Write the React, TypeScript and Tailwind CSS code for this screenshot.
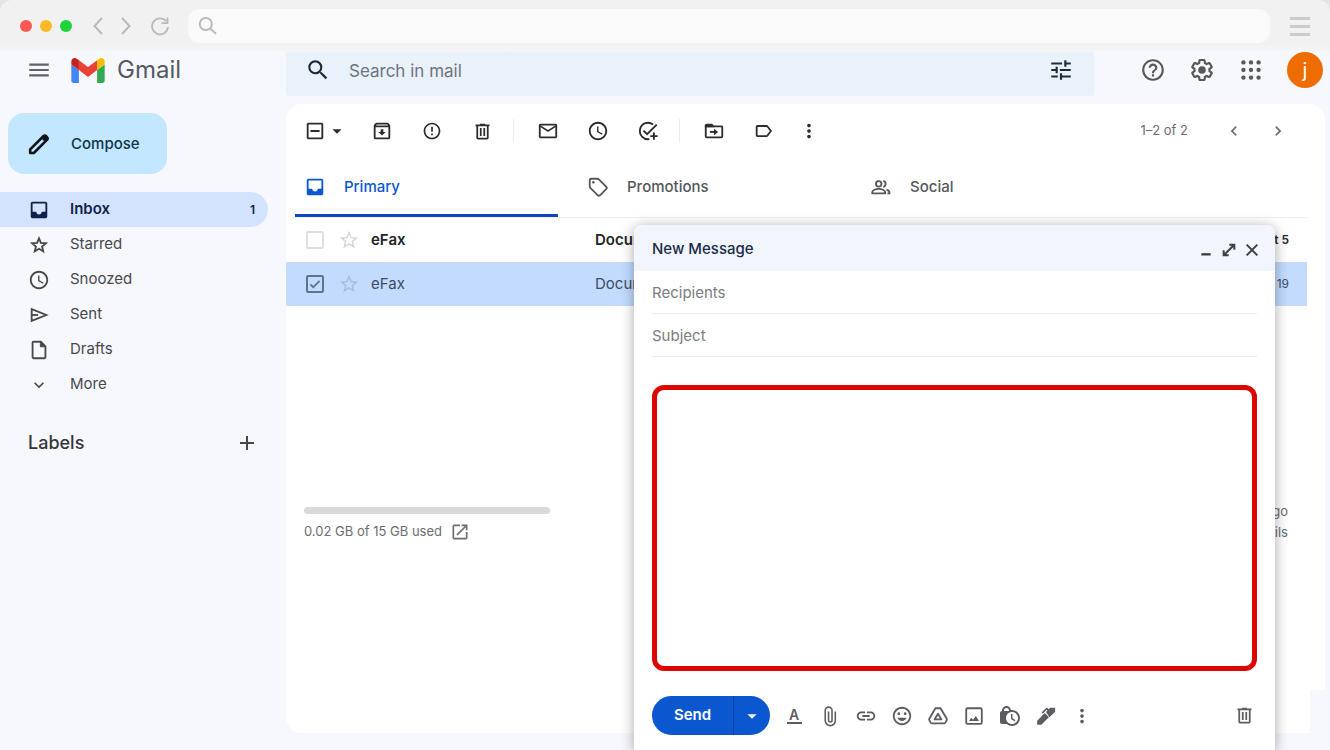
import React from "react";
import { clsx } from "clsx";
import {
  MdAdd,
  MdArrowDropDown,
  MdErrorOutline,
  MdHelpOutline,
  MdInsertLink,
  MdKeyboardArrowDown,
  MdKeyboardArrowLeft,
  MdKeyboardArrowRight,
  MdLockClock,
  MdMailOutline,
  MdMenu,
  MdMoreVert,
  MdOpenInNew,
  MdOutlineArchive,
  MdOutlineIndeterminateCheckBox,
  MdOutlineInsertEmoticon,
  MdSchedule,
  MdSearch,
  MdStarBorder,
  MdTune,
} from "react-icons/md";

// ─── Types ───────────────────────────────────────────────────────────────────

interface IconAction {
  label: string;
  icon: React.ReactNode;
}

interface Folder extends IconAction {
  count?: number;
  isActive?: boolean;
}

interface Mail {
  id: number;
  sender: string;
  subject: string;
  date: string;
  unread?: boolean;
  selected?: boolean;
}

// ─── Custom icons ────────────────────────────────────────────────────────────

function GmailLogo() {
  return (
    <svg viewBox="52 42 88 66" className="h-[25px] w-[34px]" aria-hidden="true">
      <path fill="#4285f4" d="M58 108h14V74L52 59v43c0 3.32 2.69 6 6 6" />
      <path fill="#34a853" d="M120 108h14c3.32 0 6-2.69 6-6V59l-20 15" />
      <path fill="#fbbc04" d="M120 48v26l20-15v-8c0-7.42-8.47-11.65-14.4-7.2" />
      <path fill="#ea4335" d="M72 74V48l24 18 24-18v26L96 92" />
      <path fill="#c5221f" d="M52 51v8l20 15V48l-5.6-4.2c-5.94-4.45-14.4-.22-14.4 7.2" />
    </svg>
  );
}

/** Solid glyph on the 24px grid */
function FilledIcon({ children }: { children: React.ReactNode }) {
  return (
    <svg viewBox="0 0 24 24" className="size-[22px]" fill="currentColor" aria-hidden="true">
      {children}
    </svg>
  );
}

/** Outlined glyph on the 24px grid */
function LineIcon({ className = "size-[22px]", children }: { className?: string; children: React.ReactNode }) {
  return (
    <svg
      viewBox="0 0 24 24"
      className={className}
      fill="none"
      stroke="currentColor"
      strokeWidth="2"
      aria-hidden="true"
    >
      {children}
    </svg>
  );
}

function TrashIcon() {
  return (
    <svg viewBox="0 0 24 24" className="size-[21px]" fill="currentColor" aria-hidden="true">
      <path d="M15 4V3H9v1H4v2h1v13c0 1.1.9 2 2 2h10c1.1 0 2-.9 2-2V6h1V4h-5zm2 15H7V6h10v13zM9 8h2v9H9zm4 0h2v9h-2z" />
    </svg>
  );
}

function InboxIcon() {
  return (
    <FilledIcon>
      <path d="M19 3H5c-1.1 0-2 .9-2 2v14c0 1.1.9 2 2 2h14c1.1 0 2-.9 2-2V5c0-1.1-.9-2-2-2zm0 11h-4c0 1.66-1.35 3-3 3s-3-1.34-3-3H5V5h14v9z" />
    </FilledIcon>
  );
}

function StarIcon() {
  return (
    <LineIcon className="size-5">
      <path d="m12 4 2.300 5.500 6 .5-4.600 3.900 1.400 5.800-5.100-3.100-5.100 3.100 1.400-5.800L3.700 10l6-.5z" strokeWidth="2.200" />
    </LineIcon>
  );
}

function TagIcon() {
  return (
    <LineIcon>
      <path d="M3 4.6v6.8c0 .6.2 1.1.6 1.5l8 8c.8.8 2 .8 2.8 0l6.500-6.500c.8-.8.8-2 0-2.800l-8-8c-.4-.4-.9-.6-1.500-.6H4.600C3.700 3 3 3.700 3 4.600z" />
      <circle cx="6.900" cy="6.900" r="1.400" fill="currentColor" stroke="none" />
    </LineIcon>
  );
}

function PeopleIcon() {
  return (
    <LineIcon>
      <circle cx="9.500" cy="8.500" r="3" />
      <path d="M2.500 19v-1.500c0-2 4-3.500 7-3.500s7 1.500 7 3.500V19z" />
      <path d="M14.500 5.200a3.400 3.400 0 0 1 0 6.600M18 14.800c2 .8 3.200 1.700 3.200 2.900V19H19" />
    </LineIcon>
  );
}

function SendIcon() {
  return (
    <LineIcon>
      <path d="M4 5.500v13L20 12z" />
      <path d="M4 12h7" />
    </LineIcon>
  );
}

function FileIcon() {
  return (
    <LineIcon>
      <path d="M6 3h8l5 5v12c0 .6-.4 1-1 1H6c-.6 0-1-.4-1-1V4c0-.6.4-1 1-1z" />
      <path d="M13.500 3v5.500H19L13.500 3z" fill="currentColor" strokeWidth="1" />
    </LineIcon>
  );
}

function AddTaskIcon() {
  return (
    <LineIcon>
      <path d="M17.500 4.800A9 9 0 1 0 13.500 20.900" />
      <path d="m7 11.500 4 4L21.500 5M18.500 13.500v8M14.500 17.500h8" />
    </LineIcon>
  );
}

function MoveIcon() {
  return (
    <LineIcon>
      <path d="M3 6v12c0 .6.4 1 1 1h16c.6 0 1-.4 1-1V8c0-.6-.4-1-1-1H3" />
      <path d="M2 8V6c0-1.100.9-2 2-2h6l2.500 3v1z" fill="currentColor" stroke="none" />
      <path d="M7.500 13H14" />
      <path d="m12 9.500 4.500 3.500-4.500 3.500z" fill="currentColor" stroke="none" />
    </LineIcon>
  );
}

function LabelIcon() {
  return (
    <LineIcon>
      <path d="M5 6.500h9.500c.6 0 1 .2 1.300.6L19.500 12l-3.700 4.900c-.3.400-.7.600-1.300.600H5c-.6 0-1-.4-1-1v-9c0-.6.4-1 1-1z" />
    </LineIcon>
  );
}

function ClipIcon() {
  return (
    <LineIcon>
      <path
        d="M17.800 7v10a5.500 5.500 0 0 1-11 0V6a3.700 3.700 0 0 1 7.400 0v10.500a1.900 1.900 0 0 1-3.800 0V7"
        strokeWidth="1.700"
      />
    </LineIcon>
  );
}

function PhotoIcon() {
  return (
    <LineIcon>
      <rect x="3.500" y="3.500" width="17" height="17" rx="1.500" />
      <path d="M6.500 17.500 9 14l2 2 3-4 3.500 5.500z" fill="currentColor" stroke="none" />
    </LineIcon>
  );
}

function DriveIcon() {
  return (
    <LineIcon>
      <path
        d="M9.200 3.500h5.600l6.700 11.500c.3.500.3 1 0 1.500l-1.500 2.700c-.3.500-.8.800-1.300.8H5.300c-.5 0-1-.3-1.300-.8l-1.500-2.700c-.3-.5-.3-1 0-1.500z"
        strokeLinejoin="round"
      />
      <path d="m12 9.500 3.700 6.200H8.300z" strokeLinejoin="round" />
    </LineIcon>
  );
}

function SignatureIcon() {
  return (
    <FilledIcon>
      <path d="M2.400 21.600v-4.500l8.300-8.300 4.500 4.500-8.300 8.300z" />
      <path d="m12 7.500 1.500-1.500-.8-.7L8.500 9.500 7.200 8.200l4.900-4.900c.5-.4 1-.4 1.400 0l1.500 1.300 1.200-1.200c.2-.3.500-.4.800-.4H22v4.300l-6.200 6z" />
    </FilledIcon>
  );
}

function FormatIcon() {
  return <span className="w-[15px] border-b-2 text-center text-sm leading-[14px] font-semibold">A</span>;
}

function CheckIcon() {
  return (
    <LineIcon className="pointer-events-none absolute size-[14px] text-[#5f7390]">
      <path d="m4 12.500 5 5L20 6.500" strokeWidth="3" />
    </LineIcon>
  );
}

function MinimizeIcon() {
  return (
    <LineIcon className="size-4">
      <path d="M5 18.500h14" strokeWidth="3.500" />
    </LineIcon>
  );
}

function ExpandIcon() {
  return (
    <LineIcon className="size-4">
      <path d="M12.500 4H20v7.500M11.500 20H4v-7.500M19.500 4.500l-15 15" strokeWidth="3" />
    </LineIcon>
  );
}

function CloseIcon() {
  return (
    <LineIcon className="size-4">
      <path d="m4 4 16 16M20 4 4 20" strokeWidth="3" />
    </LineIcon>
  );
}

function PencilIcon() {
  return (
    <svg viewBox="0 0 24 24" className="size-6" aria-hidden="true">
      <path
        d="M3.200 21v-3.600L16.600 4a1.600 1.600 0 0 1 2.300 0l1.300 1.300a1.600 1.600 0 0 1 0 2.300L6.800 21z"
        fill="none"
        stroke="currentColor"
        strokeWidth="2.600"
        strokeLinejoin="round"
      />
      <path d="M14 6 17 3l4.200 4.200-3 3z" fill="currentColor" />
    </svg>
  );
}

function GearIcon() {
  return (
    <svg viewBox="0 0 24 24" className="size-[26px]" fill="currentColor" aria-hidden="true">
      <path d="M13.85 22.25h-3.7c-.74 0-1.36-.54-1.45-1.27l-.27-1.89c-.27-.14-.53-.29-.79-.46l-1.8.72c-.7.26-1.47-.03-1.81-.65L2.2 15.53c-.35-.66-.2-1.44.36-1.88l1.53-1.19c-.01-.15-.02-.3-.02-.46 0-.15.01-.31.02-.46l-1.52-1.19c-.59-.45-.74-1.26-.37-1.88l1.85-3.19c.34-.62 1.11-.9 1.79-.63l1.81.73c.26-.17.52-.32.78-.46l.27-1.91c.09-.7.71-1.25 1.44-1.25h3.7c.74 0 1.36.54 1.45 1.27l.27 1.89c.27.14.53.29.79.46l1.8-.72c.71-.26 1.48.03 1.82.65l1.84 3.18c.36.66.2 1.44-.36 1.88l-1.52 1.19c.01.15.02.3.02.46s-.01.31-.02.46l1.52 1.19c.56.45.72 1.23.37 1.86l-1.86 3.22c-.34.62-1.11.9-1.8.63l-1.8-.72c-.26.17-.52.32-.78.46l-.27 1.91c-.1.68-.72 1.22-1.46 1.22zm-3.23-2h2.76l.37-2.55.53-.22c.44-.18.88-.44 1.34-.78l.45-.34 2.38.96 1.38-2.4-2.03-1.58.07-.56c.03-.26.06-.51.06-.78s-.03-.53-.06-.78l-.07-.56 2.03-1.58-1.39-2.4-2.39.96-.45-.35c-.42-.32-.87-.58-1.33-.77l-.52-.22-.37-2.55h-2.76l-.37 2.55-.53.21c-.44.19-.88.44-1.34.79l-.45.33-2.38-.95-1.39 2.39 2.03 1.58-.07.56a7 7 0 0 0-.06.79c0 .26.02.53.06.78l.07.56-2.03 1.58 1.38 2.4 2.39-.96.45.35c.43.33.86.58 1.33.77l.53.22.38 2.55z" />
      <circle cx="12" cy="12" r="3.500" />
    </svg>
  );
}

function AppsIcon() {
  return (
    <svg viewBox="0 0 24 24" className="size-[26px]" fill="currentColor" aria-hidden="true">
      {[5, 12, 19].map((y) => [5, 12, 19].map((x) => <circle key={`${x}-${y}`} cx={x} cy={y} r="2" />))}
    </svg>
  );
}

function ReloadIcon() {
  return (
    <svg viewBox="0 0 20 20" className="size-5" fill="none" stroke="currentColor" strokeWidth="1.800" aria-hidden="true">
      <path d="M16.200 5.200A8 8 0 1 0 18 11.200" />
      <path d="M11.500 7.200h6V1.400" />
    </svg>
  );
}

// ─── Data ────────────────────────────────────────────────────────────────────

const FOLDERS: Folder[] = [
  { label: "Inbox", icon: <InboxIcon />, count: 1, isActive: true },
  { label: "Starred", icon: <StarIcon /> },
  { label: "Snoozed", icon: <MdSchedule className="size-[22px]" /> },
  { label: "Sent", icon: <SendIcon /> },
  { label: "Drafts", icon: <FileIcon /> },
  { label: "More", icon: <MdKeyboardArrowDown className="size-5" /> },
];

const TOOLBAR_GROUPS: IconAction[][] = [
  [
    { label: "Archive", icon: <MdOutlineArchive className="size-[22px]" /> },
    { label: "Report spam", icon: <MdErrorOutline className="size-5" /> },
    { label: "Delete", icon: <TrashIcon /> },
  ],
  [
    { label: "Mark as unread", icon: <MdMailOutline className="size-[22px]" /> },
    { label: "Snooze", icon: <MdSchedule className="size-[22px]" /> },
    { label: "Add to tasks", icon: <AddTaskIcon /> },
  ],
];

const TABS: Folder[] = [
  { label: "Primary", icon: <InboxIcon />, isActive: true },
  { label: "Promotions", icon: <TagIcon /> },
  { label: "Social", icon: <PeopleIcon /> },
];

const MAILS: Mail[] = [
  { id: 1, sender: "eFax", subject: "Docum", date: "Oct 5", unread: true },
  { id: 2, sender: "eFax", subject: "Docum", date: "Sep 19", selected: true },
];

const COMPOSE_ACTIONS: IconAction[] = [
  { label: "Formatting options", icon: <FormatIcon /> },
  { label: "Attach files", icon: <ClipIcon /> },
  { label: "Insert link", icon: <MdInsertLink className="size-[22px]" /> },
  { label: "Insert emoji", icon: <MdOutlineInsertEmoticon className="size-[22px]" /> },
  { label: "Insert files using Drive", icon: <DriveIcon /> },
  { label: "Insert photo", icon: <PhotoIcon /> },
  { label: "Confidential mode", icon: <MdLockClock className="size-6" /> },
  { label: "Insert signature", icon: <SignatureIcon /> },
  { label: "More options", icon: <MdMoreVert className="size-[22px]" /> },
];

// ─── Browser chrome ──────────────────────────────────────────────────────────

function BrowserBar() {
  return (
    <div className="bg-[#e4e4e4]">
      <div className="flex h-[52px] items-center rounded-t-xl bg-gradient-to-b from-[#f1f1f1] from-85% to-[#f5f6f9] px-5 text-[#b9b9b9]">
        <div className="flex gap-2">
          <span className="size-3 rounded-full bg-[#fe5850]" />
          <span className="size-3 rounded-full bg-[#fdb827]" />
          <span className="size-3 rounded-full bg-[#1fd33b]" />
        </div>
        <div className="ml-[14px] flex items-center gap-1">
          <button type="button" aria-label="Back" className="flex w-6 justify-center">
            <svg viewBox="0 0 10 18" className="h-[18px] w-[10px]" fill="none" stroke="currentColor" strokeWidth="2">
              <path d="M9 1 1.500 9 9 17" />
            </svg>
          </button>
          <button type="button" aria-label="Forward" className="flex w-6 justify-center">
            <svg viewBox="0 0 10 18" className="h-[18px] w-[10px]" fill="none" stroke="currentColor" strokeWidth="2">
              <path d="m1 1 7.500 8L1 17" />
            </svg>
          </button>
        </div>
        <button type="button" aria-label="Reload" className="ml-3">
          <ReloadIcon />
        </button>
        <label className="ml-[18px] flex h-[34px] flex-1 items-center rounded-xl bg-[#fafafa] px-[10px]">
          <svg viewBox="0 0 20 20" className="size-5" fill="none" stroke="currentColor" strokeWidth="2">
            <circle cx="8" cy="8" r="6.200" />
            <path d="m12.500 12.500 6 5.500" />
          </svg>
          <input type="text" aria-label="Address" className="ml-2 w-full bg-transparent outline-none" />
        </label>
        <button type="button" aria-label="Browser menu" className="ml-5 flex w-5 flex-col gap-[5px]">
          <span className="h-[3px] bg-[#cacaca]" />
          <span className="h-[3px] bg-[#cacaca]" />
          <span className="h-[3px] bg-[#cacaca]" />
        </button>
      </div>
    </div>
  );
}

// ─── Header ──────────────────────────────────────────────────────────────────

function Header() {
  return (
    <header className="flex h-11 items-start">
      <div className="flex h-9 w-[286px] shrink-0 items-center pl-[26px]">
        <button type="button" aria-label="Main menu" className="text-[#5f6368]">
          <MdMenu className="size-[26px]" />
        </button>
        <a href="#inbox" className="ml-[19px] flex items-center gap-3 text-2xl text-[#55585d]">
          <GmailLogo />
          Gmail
        </a>
      </div>
      <form className="flex h-11 flex-1 rounded-b-sm bg-[#e9f1fb] pr-5 pl-[19px]">
        <div className="flex h-9 flex-1 items-center">
          <button type="button" aria-label="Search" className="text-[#1f2a3d]">
            <MdSearch className="size-[26px]" />
          </button>
          <input
            type="search"
            aria-label="Search in mail"
            placeholder="Search in mail"
            className="ml-[18px] h-9 min-w-0 flex-1 bg-transparent pt-[2px] text-[17px] outline-none placeholder:text-[#6d7480]"
          />
          <button type="button" aria-label="Show search options" className="text-[#1f2a3d]">
            <MdTune className="size-[26px]" />
          </button>
        </div>
      </form>
      <div className="flex h-9 w-[236px] shrink-0 items-center justify-end gap-[23px] pr-[7px] text-[#55585d]">
        <button type="button" aria-label="Support">
          <MdHelpOutline className="size-[26px]" />
        </button>
        <button type="button" aria-label="Settings">
          <GearIcon />
        </button>
        <button type="button" aria-label="Google apps">
          <AppsIcon />
        </button>
        <button
          type="button"
          aria-label="Account"
          className="flex size-9 items-center justify-center rounded-full bg-[#ef6c00] text-xl text-white"
        >
          j
        </button>
      </div>
    </header>
  );
}

// ─── Sidebar ─────────────────────────────────────────────────────────────────

function Sidebar() {
  return (
    <aside className="w-[286px] shrink-0 pt-[17px]">
      <button
        type="button"
        className="ml-2 flex h-[61px] w-[159px] items-center gap-5 rounded-2xl bg-[#c2e7ff] pt-px pl-[19px] text-[15px] font-medium text-[#12344d]"
      >
        <span className="text-[#10131a]">
          <PencilIcon />
        </span>
        Compose
      </button>
      <nav className="mt-[18px] w-[268px]">
        {FOLDERS.map((folder) => (
          <a
            key={folder.label}
            href={`#${folder.label.toLowerCase()}`}
            className={clsx(
              "flex h-[35px] items-center rounded-r-full pr-[13px] pl-[27px] text-[15px]",
              folder.isActive ? "bg-[#d3e3fd] font-semibold text-[#0f1f4b]" : "text-[#46484d]",
            )}
          >
            <span className="flex w-6 justify-center">{folder.icon}</span>
            <span className="ml-[19px] flex-1">{folder.label}</span>
            {folder.count && <span className="text-xs">{folder.count}</span>}
          </a>
        ))}
      </nav>
      <div className="mt-7 flex h-[26px] w-[268px] items-center justify-between pr-[9px] pl-7">
        <h2 className="text-lg font-medium text-[#34363a]">Labels</h2>
        <button type="button" aria-label="Create new label" className="text-[#46484d]">
          <MdAdd className="size-6" />
        </button>
      </div>
    </aside>
  );
}

// ─── Mail list ───────────────────────────────────────────────────────────────

function Toolbar() {
  return (
    <div className="flex h-[54px] items-center pr-[37px] pl-[18px] text-[#2b2c2e]">
      <button type="button" aria-label="Select" className="flex w-[53px] items-center">
        <MdOutlineIndeterminateCheckBox className="size-[22px]" />
        <MdArrowDropDown className="size-[22px]" />
      </button>
      {TOOLBAR_GROUPS.map((group) => (
        <div key={group[0].label} className="flex items-center">
          {group.map((action) => (
            <button key={action.label} type="button" aria-label={action.label} className="flex w-[50px] justify-center">
              {action.icon}
            </button>
          ))}
          <span className="mr-[9px] ml-[6px] h-6 w-px bg-[#ececee]" />
        </div>
      ))}
      <button type="button" aria-label="Move to" className="flex w-[50px] justify-center">
        <MoveIcon />
      </button>
      <button type="button" aria-label="Labels" className="flex w-[50px] justify-center">
        <LabelIcon />
      </button>
      <button type="button" aria-label="More" className="flex w-10 justify-center">
        <MdMoreVert className="size-[22px]" />
      </button>
      <div className="ml-auto flex items-center gap-6 text-[#6b6d71]">
        <span className="mr-3 text-[13px]">1–2 of 2</span>
        <button type="button" aria-label="Newer">
          <MdKeyboardArrowLeft className="size-5" />
        </button>
        <button type="button" aria-label="Older">
          <MdKeyboardArrowRight className="size-5" />
        </button>
      </div>
    </div>
  );
}

function Tabs() {
  return (
    <div role="tablist" className="mr-[18px] ml-[9px] flex gap-5 border-b border-[#f0f0f3]">
      {TABS.map((tab) => (
        <button
          key={tab.label}
          type="button"
          role="tab"
          aria-selected={!!tab.isActive}
          className={clsx(
            "flex h-[59px] w-[263px] items-center gap-[18px] border-b-[3px] pt-[2px] pl-[9px] text-[15px] font-medium",
            tab.isActive ? "border-[#0b47c0] text-[#0b57d0]" : "border-transparent text-[#55575b]",
          )}
        >
          {tab.icon}
          {tab.label}
        </button>
      ))}
    </div>
  );
}

function MailTable() {
  return (
    <table className="w-full table-fixed border-collapse text-[15px]">
      <tbody>
        {MAILS.map((mail) => (
          <tr
            key={mail.id}
            className={clsx(
              "h-11",
              mail.selected ? "bg-[#c2dbff] text-[#3d4c63]" : "text-[#232427]",
              mail.unread && "font-semibold",
            )}
          >
            <td className="w-[52px] pl-5">
              <span className="relative flex size-[18px] items-center justify-center">
                <input
                  type="checkbox"
                  aria-label={`Select mail ${mail.id}`}
                  defaultChecked={mail.selected}
                  className={clsx(
                    "size-[18px] appearance-none rounded-xs border-2",
                    mail.selected ? "border-[#5f7390]" : "border-[#dedfe1]",
                  )}
                />
                {mail.selected && <CheckIcon />}
              </span>
            </td>
            <td className="w-[33px]">
              <button
                type="button"
                aria-label="Star"
                className={clsx("flex", mail.selected ? "text-[#a9bedf]" : "text-[#d3d5d8]")}
              >
                <MdStarBorder className="size-[22px]" />
              </button>
            </td>
            <td className="w-[224px]">{mail.sender}</td>
            <td>{mail.subject}</td>
            <td className="w-24 pr-[18px] text-right text-xs">{mail.date}</td>
          </tr>
        ))}
      </tbody>
    </table>
  );
}

function StorageFooter() {
  return (
    <footer className="mt-[195px] flex justify-between pr-[37px] pb-40 pl-[18px] text-[13px] text-[#6b6d71]">
      <div className="pt-[6px]">
        <div className="h-[7px] w-[246px] rounded-full bg-[#dadada]" />
        <a href="#storage" className="mt-2 flex items-center gap-2">
          0.02 GB of 15 GB used
          <MdOpenInNew className="size-5" />
        </a>
      </div>
      <div className="text-right leading-[21px]">
        <p>Last account activity: 6 minutes ago</p>
        <a href="#details">Details</a>
      </div>
    </footer>
  );
}

// ─── Compose window ──────────────────────────────────────────────────────────

function ComposeWindow() {
  return (
    <section
      aria-label="New Message"
      className="absolute right-[55px] bottom-0 w-[641px] rounded-t-lg bg-white text-[15px] shadow-[0_2px_14px_rgba(0,0,0,0.35)]"
    >
      <div className="flex h-[46px] items-center rounded-t-lg bg-[#f2f6fc] pt-[3px] pr-[15px] pl-[18px] text-[#3c3f44]">
        <h2 className="flex-1 font-medium text-[#1c2b4b]">New Message</h2>
        <div className="flex items-center gap-[7px]">
          <button type="button" aria-label="Minimize">
            <MinimizeIcon />
          </button>
          <button type="button" aria-label="Full screen">
            <ExpandIcon />
          </button>
          <button type="button" aria-label="Close">
            <CloseIcon />
          </button>
        </div>
      </div>
      <form className="px-[18px] pb-[15px]">
        <input
          type="text"
          aria-label="Recipients"
          placeholder="Recipients"
          className="h-[43px] w-full border-b border-[#ececee] outline-none placeholder:text-[#7b7d81]"
        />
        <input
          type="text"
          aria-label="Subject"
          placeholder="Subject"
          className="h-[43px] w-full border-b border-[#ececee] outline-none placeholder:text-[#7b7d81]"
        />
        <textarea
          aria-label="Message body"
          className="mt-7 block h-[286px] w-full resize-none rounded-xl border-[5px] border-[#dd0404] p-3 outline-none"
        />
        <div className="mt-[25px] flex items-center text-[#5b5d61]">
          <div className="flex h-[39px] overflow-hidden rounded-full bg-[#0b57d0] text-white">
            <button type="button" className="w-[81px] font-semibold">
              Send
            </button>
            <button
              type="button"
              aria-label="More send options"
              className="flex w-[37px] items-center justify-center border-l border-[#0842a0]"
            >
              <MdArrowDropDown className="size-[22px]" />
            </button>
          </div>
          <div className="ml-[6px] flex">
            {COMPOSE_ACTIONS.map((action) => (
              <button key={action.label} type="button" aria-label={action.label} className="flex w-9 items-center justify-center">
                {action.icon}
              </button>
            ))}
          </div>
          <button type="button" aria-label="Discard draft" className="mr-[2px] ml-auto">
            <TrashIcon />
          </button>
        </div>
      </form>
    </section>
  );
}

// ─── App ─────────────────────────────────────────────────────────────────────

export default function App() {
  return (
    <div className="relative flex min-h-screen flex-col overflow-hidden bg-[#f7f8fd] font-['Inter','Liberation_Sans',sans-serif]">
      <BrowserBar />
      <Header />
      <div className="flex flex-1">
        <Sidebar />
        <main className="relative mt-2 mr-[5px] mb-[17px] min-w-0 flex-1 rounded-2xl bg-white">
          <Toolbar />
          <Tabs />
          <div className="mr-[18px]">
            <MailTable />
          </div>
          <StorageFooter />
          <span className="absolute right-0 bottom-0 h-[43px] w-[15px] bg-[#f7f8fd]" />
        </main>
      </div>
      <ComposeWindow />
    </div>
  );
}
